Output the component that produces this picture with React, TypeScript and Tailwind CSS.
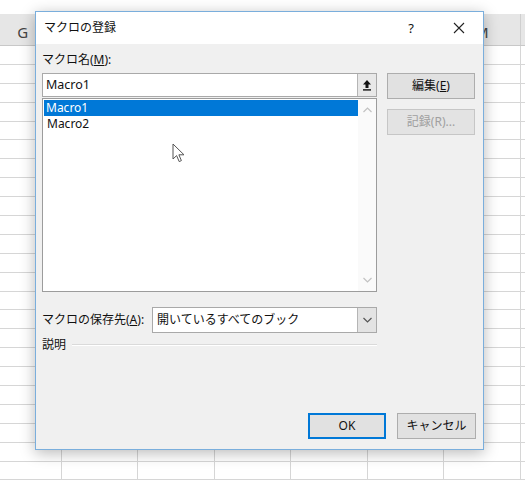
import React from "react";

const cols = ["G", "H", "I", "J", "K", "L", "M"];
const rows = Array.from({ length: 23 });

const Chevron = ({ up = false, className = "" }: { up?: boolean; className?: string }) => (
  <svg width="9" height="6" viewBox="0 0 9 6" className={className}>
    <path
      d={up ? "M0.5 5 L4.5 1 L8.5 5" : "M0.5 1 L4.5 5 L8.5 1"}
      fill="none"
      stroke="currentColor"
      strokeWidth="1.2"
    />
  </svg>
);

// only G and M peek out from under the dialog
const Sheet = () => (
  <div className="flex flex-col w-full h-full">
    <div className="h-[14px] bg-white" />
    <div className="flex h-[32px] bg-[#e6e6e6] border-b border-[#c8c8c8] ml-[-15px]">
      {cols.map((c) => (
        <div
          key={c}
          className="w-[76.5px] shrink-0 border-r border-[#cfcfcf] flex items-end justify-center pb-[2px] text-[15px] text-[#444]"
        >
          {c === "G" || c === "M" ? c : ""}
        </div>
      ))}
    </div>
    {rows.map((_, i) => (
      <div key={i} className="flex h-[18.9px] shrink-0 border-b border-[#d6d6d6] ml-[-15px]">
        {cols.map((c) => (
          <div key={c} className="w-[76.5px] shrink-0 border-r border-[#d6d6d6]" />
        ))}
      </div>
    ))}
  </div>
);

const Btn = ({
  children,
  disabled = false,
  primary = false,
  className = "",
}: {
  children: React.ReactNode;
  disabled?: boolean;
  primary?: boolean;
  className?: string;
}) => (
  <div
    className={
      "h-[26px] flex items-center justify-center text-[12px] " +
      (primary
        ? "border-2 border-[#0078d7] bg-[#e1e1e1] text-[#111] "
        : disabled
        ? "border border-[#c6c6c6] bg-[#e3e3e3] text-[#a0a0a0] "
        : "border border-[#adadad] bg-[#e1e1e1] text-[#111] ") +
      className
    }
  >
    {children}
  </div>
);

export default function App() {
  return (
    <div
      className="relative w-[525px] h-[481px] overflow-hidden bg-white"
      style={{ fontFamily: '"Noto Sans", "Noto Sans CJK JP", sans-serif' }}
    >
      <Sheet />

      {/* dialog window */}
      <div className="absolute left-[35px] top-[11px] w-[449px] h-[439px] border border-[#7aaedc] bg-[#f0f0f0] flex flex-col shadow-[0_3px_14px_rgba(0,0,0,0.28)]">
        <div className="h-[32px] bg-white flex items-center pl-[8px] text-[12px] text-[#111]">
          <span className="flex-1 leading-none">マクロの登録</span>
          <span className="w-[20px] text-center text-[13px] leading-none mr-[32px]">?</span>
          <svg width="12" height="12" viewBox="0 0 12 12" className="mr-[18px]">
            <path d="M1 1 L11 11 M11 1 L1 11" stroke="#222" strokeWidth="1.1" />
          </svg>
        </div>

        <div className="flex-1 flex flex-col pl-[6px] pr-[7px] pt-[8px] pb-[10px] text-[12px] text-[#111]">
          <div className="h-[16px] leading-[16px]">
            マクロ名(<span className="underline">M</span>):
          </div>
          <div className="flex mt-[5px]">
            <div className="w-[335px] flex flex-col">
              <div className="h-[24px] flex border border-[#a9a9a9] bg-white text-[12.5px]">
                <div className="flex-1 flex items-center pl-[3px]">Macro1</div>
                <div className="w-[19px] bg-[#e8e8e8] border-l border-[#b5b5b5] flex items-center justify-center">
                  <svg width="10" height="12" viewBox="0 0 10 12">
                    <path d="M5 1 L9 5.5 H6.5 V9 H3.5 V5.5 H1 Z" fill="#111" />
                    <rect x="1" y="10.2" width="8" height="1.4" fill="#111" />
                  </svg>
                </div>
              </div>
              <div className="h-[194px] mt-[1px] flex border border-[#9c9c9c] bg-white">
                <div className="flex-1 flex flex-col pt-[1px] pl-[1px]">
                  <div className="h-[16px] bg-[#0078d7] text-white flex items-center pl-[2px] leading-[16px]">
                    Macro1
                  </div>
                  <div className="h-[16px] flex items-center pl-[3px] leading-[16px]">Macro2</div>
                </div>
                <div className="w-[18px] bg-[#fafafa] flex flex-col items-center justify-between py-[8px] text-[#c2c2c2]">
                  <Chevron up />
                  <Chevron />
                </div>
              </div>
            </div>
            <div className="w-[88px] ml-[10px] flex flex-col gap-[10px]">
              <Btn>
                編集(<span className="underline">E</span>)
              </Btn>
              <Btn disabled>記録(R)...</Btn>
            </div>
          </div>

          <div className="flex items-center mt-[15px] w-[335px]">
            <div className="w-[110px]">
              マクロの保存先(<span className="underline">A</span>):
            </div>
            <div className="flex-1 h-[26px] flex border border-[#a9a9a9] bg-white">
              <div className="flex-1 flex items-center pl-[4px]">開いているすべてのブック</div>
              <div className="w-[19px] bg-[#e3e3e3] border-l border-[#b5b5b5] flex items-center justify-center text-[#555]">
                <Chevron />
              </div>
            </div>
          </div>

          <div className="flex items-center mt-[5px] w-[335px] h-[14px]">
            <span className="leading-none">説明</span>
            <div className="flex-1 ml-[6px] border-t border-[#dadada] border-b border-b-white" />
          </div>

          <div className="mt-auto flex justify-end gap-[11px]">
            <Btn primary className="w-[78px]">
              OK
            </Btn>
            <Btn className="w-[79px]">キャンセル</Btn>
          </div>
        </div>
      </div>

      {/* mouse pointer */}
      <svg
        width="14"
        height="21"
        viewBox="0 0 14 21"
        className="absolute left-[172px] top-[143px]"
      >
        <path
          d="M1 1 V16 L4.6 12.6 L7.2 18.6 L9.4 17.6 L6.9 11.8 H12 Z"
          fill="white"
          stroke="#555"
          strokeWidth="1"
          strokeLinejoin="round"
        />
      </svg>
    </div>
  );
}
